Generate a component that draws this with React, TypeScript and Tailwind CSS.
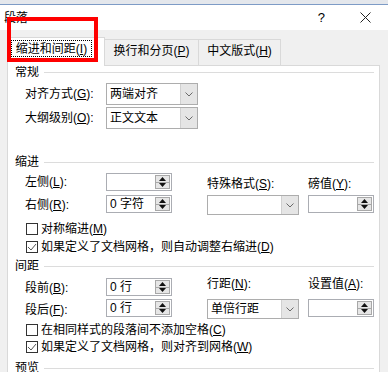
import type { ReactNode } from "react";

const Key = ({ k }: { k: string }) => (
  <span className="underline underline-offset-[1px]">{k}</span>
);

const Label = ({ text, k, className = "" }: { text: string; k: string; className?: string }) => (
  <span className={`whitespace-nowrap ${className}`}>
    {text}(<Key k={k} />):
  </span>
);

const Chevron = () => (
  <svg width="8" height="5" viewBox="0 0 8 5">
    <path d="M0.5 0.5 L4 4 L7.5 0.5" fill="none" stroke="#6a6a6a" strokeWidth="1" />
  </svg>
);

const Select = ({ value, width, height }: { value?: string; width: string; height: string }) => (
  <div className={`flex border border-[#adadad] bg-white ${width} ${height}`}>
    <div className="flex flex-1 items-center pl-[3px]">{value}</div>
    <div className="flex w-[17px] items-center justify-center border-l border-[#d0d0d0] bg-[#e5e5e5]">
      <Chevron />
    </div>
  </div>
);

const Tri = ({ up }: { up?: boolean }) => (
  <svg width="7" height="4" viewBox="0 0 7 4">
    <path d={up ? "M0 4 L3.5 0 L7 4 Z" : "M0 0 L3.5 4 L7 0 Z"} fill="#111" />
  </svg>
);

const Spin = ({ value }: { value?: string }) => (
  <div className="flex h-[18px] w-[66px] border border-[#abadb3] bg-white">
    <div className="flex flex-1 items-center pl-[3px]">{value}</div>
    <div className="my-[1px] mr-[1px] flex w-[15px] flex-col border border-[#a8a8a8] bg-[#e6e6e6]">
      <div className="flex flex-1 items-center justify-center border-b border-[#a8a8a8]">
        <Tri up />
      </div>
      <div className="flex flex-1 items-center justify-center">
        <Tri />
      </div>
    </div>
  </div>
);

const Check = ({ checked, children, className = "" }: { checked?: boolean; children: ReactNode; className?: string }) => (
  <div className={`flex h-[14px] items-center pl-[11px] ${className}`}>
    <div className="flex h-[12px] w-[12px] items-center justify-center border border-[#333] bg-white">
      {checked && (
        <svg width="10" height="10" viewBox="0 0 10 10">
          <path d="M1 5 L4 8 L9 2" fill="none" stroke="#555" strokeWidth="1" />
        </svg>
      )}
    </div>
    <span className="ml-[3px] whitespace-nowrap">{children}</span>
  </div>
);

const Header = ({ title, className = "" }: { title: string; className?: string }) => (
  <div className={`flex h-[12px] items-center ${className}`}>
    <span>{title}</span>
    <div className="ml-[5px] h-px flex-1 bg-[#dcdcdc]" />
  </div>
);

export default function App() {
  return (
    <div className="relative h-[372px] w-[388px] overflow-hidden bg-[#f0f0f0] font-['Liberation_Sans','Noto_Sans_CJK_SC',sans-serif] text-[12px] leading-[12px] text-black">
      <div className="h-[4px] bg-[#e4e7ec]" />
      <div className="h-[1px] bg-[#7d9bc6]" />

      <div className="flex h-[25px] items-center bg-white pl-[4px] pr-[17px]">
        <span className="text-[12px]">段落</span>
        <span className="ml-auto text-[13px]">?</span>
        <svg className="ml-[35px]" width="11" height="11" viewBox="0 0 11 11">
          <path d="M0.5 0.5 L10.5 10.5 M10.5 0.5 L0.5 10.5" stroke="#222" strokeWidth="1" />
        </svg>
      </div>

      <div className="pl-[7px] pt-[7px]">
        <div className="flex h-[28px] items-end">
          <div className="relative z-10 -mb-px h-[29px] w-[98px] border-x border-t border-[#d9d9d9] bg-white pl-[3px] pt-[2px]">
            <div className="flex h-[17px] w-[81px] items-center justify-center border border-dotted border-black">
              缩进和间距(<Key k="I" />)
            </div>
          </div>
          <div className="flex h-[26px] w-[94px] justify-center border-r border-t border-[#d9d9d9] pt-[3px] leading-[17px]">
            换行和分页(<Key k="P" />)
          </div>
          <div className="flex h-[26px] w-[82px] justify-center border-r border-t border-[#d9d9d9] pt-[3px] leading-[17px]">
            中文版式(<Key k="H" />)
          </div>
        </div>

        <div className="h-[320px] w-[373px] border border-[#d9d9d9] bg-white pl-[7px] pr-[5px]">
          <Header title="常规" />
          <div className="mt-[5px] flex items-center pl-[10px]">
            <Label text="对齐方式" k="G" className="w-[81px]" />
            <Select value="两端对齐" width="w-[92px]" height="h-[22px]" />
          </div>
          <div className="mt-[2px] flex items-center pl-[10px]">
            <Label text="大纲级别" k="O" className="w-[81px]" />
            <Select value="正文文本" width="w-[92px]" height="h-[22px]" />
          </div>

          <Header title="缩进" className="mt-[27px]" />
          <div className="mt-[5px] flex h-[18px] items-center pl-[10px]">
            <Label text="左侧" k="L" className="w-[81px]" />
            <Spin />
            <Label text="特殊格式" k="S" className="ml-[35px] mt-[3px] w-[92px]" />
            <Label text="磅值" k="Y" className="ml-[9px] mt-[3px]" />
          </div>
          <div className="mt-[4px] flex h-[20px] items-start pl-[10px]">
            <div className="flex h-[18px] w-[81px] items-center pt-[2px]">
              <Label text="右侧" k="R" />
            </div>
            <Spin value="0 字符" />
            <div className="ml-[35px]">
              <Select width="w-[92px]" height="h-[20px]" />
            </div>
            <div className="ml-[9px]">
              <Spin />
            </div>
          </div>
          <Check className="mt-[7px]">
            对称缩进(<Key k="M" />)
          </Check>
          <Check checked className="mt-[4px]">
            如果定义了文档网格，则自动调整右缩进(<Key k="D" />)
          </Check>

          <Header title="间距" className="mt-[6px]" />
          <div className="mt-[6px] flex h-[18px] items-center pl-[10px]">
            <div className="flex h-[18px] w-[81px] items-center pt-[2px]">
              <Label text="段前" k="B" />
            </div>
            <Spin value="0 行" />
            <Label text="行距" k="N" className="mb-[6px] ml-[35px] w-[92px]" />
            <Label text="设置值" k="A" className="mb-[6px] ml-[9px]" />
          </div>
          <div className="mt-[3px] flex h-[20px] items-start pl-[10px]">
            <div className="flex h-[18px] w-[81px] items-center pt-[3px]">
              <Label text="段后" k="F" />
            </div>
            <Spin value="0 行" />
            <div className="ml-[35px]">
              <Select value="单倍行距" width="w-[92px]" height="h-[20px]" />
            </div>
            <div className="ml-[9px]">
              <Spin />
            </div>
          </div>
          <Check className="mt-[4px]">
            在相同样式的段落间不添加空格(<Key k="C" />)
          </Check>
          <Check checked className="mt-[3px]">
            如果定义了文档网格，则对齐到网格(<Key k="W" />)
          </Check>

          <Header title="预览" className="mt-[8px]" />
        </div>
      </div>

      <div className="absolute left-[7px] top-[17px] z-20 h-[45px] w-[91px] border-[4px] border-[#ff0000]" />
    </div>
  );
}
